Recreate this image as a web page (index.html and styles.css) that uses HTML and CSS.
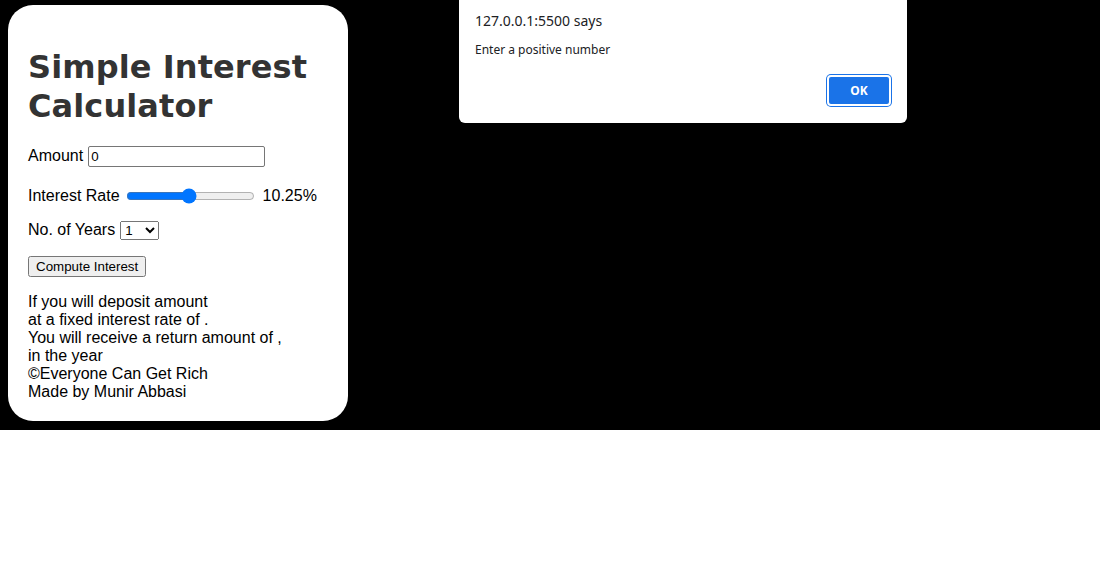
FILE: index.html
```html
<!DOCTYPE html>
<html>
<head>
<meta charset="utf-8">
<link rel="stylesheet" href="styles.css">
</head>
<body>
<div class="stage">
  <main class="card">
    <h1 class="title">Simple Interest Calculator</h1>
    <div class="row row-amount">
      <label for="amount">Amount</label>
      <input id="amount" class="amount" type="number" value="0">
    </div>
    <div class="row row-rate">
      <label for="rate">Interest Rate</label>
      <input id="rate" class="rate" type="range" min="1" max="20" step="0.25" value="10.25">
      <span class="rate-val">10.25%</span>
    </div>
    <div class="row row-years">
      <label for="years">No. of Years</label>
      <select id="years" class="years">
        <option>1</option><option>2</option><option>3</option><option>4</option><option>5</option>
        <option>6</option><option>7</option><option>8</option><option>9</option><option>10</option>
      </select>
    </div>
    <div class="row row-btn">
      <button class="compute" type="button">Compute Interest</button>
    </div>
    <div class="result">
      If you will deposit amount<br>
      at a fixed interest rate of .<br>
      You will receive a return amount of ,<br>
      in the year<br>
      ©Everyone Can Get Rich<br>
      Made by Munir Abbasi
    </div>
  </main>
</div>
<div class="dialog">
  <div class="dialog-title">127.0.0.1:5500 says</div>
  <div class="dialog-msg">Enter a positive number</div>
  <div class="dialog-actions">
    <button class="ok" type="button">OK</button>
  </div>
</div>
</body>
</html>
```
FILE: styles.css
```css
html, body {
  margin: 0;
  padding: 0;
  background: #fff;
}
body {
  font-family: "Liberation Sans", Arial, sans-serif;
  font-size: 16px;
  color: #000;
}
.stage {
  background: #000;
  height: 430px;
  padding: 5px 8px 0;
  box-sizing: border-box;
}
.card {
  width: 340px;
  height: 416px;
  box-sizing: border-box;
  background: #fff;
  border-radius: 25px;
  padding: 20px 20px 20px 20px;
}
.title {
  font-family: "DejaVu Sans", Verdana, sans-serif;
  font-weight: bold;
  font-size: 32px;
  color: #333;
  margin: 23px 0 19px;
  line-height: 39px;
  letter-spacing: 0.1px;
}
.row {
  display: flex;
  align-items: center;
}
.row label {
  margin-right: 5px;
}
.row-amount {
  height: 22px;
}
.amount {
  width: 177px;
  height: 21px;
  box-sizing: border-box;
  font-size: 13.33px;
  font-family: "Liberation Sans", Arial, sans-serif;
  border: 1px solid #767676;
  border-radius: 2px;
  padding: 1px 2px;
  margin: 0;
}
.amount::-webkit-inner-spin-button,
.amount::-webkit-outer-spin-button {
  -webkit-appearance: none;
  margin: 0;
}
.row-rate {
  margin-top: 19px;
  height: 20px;
}
.row-rate label {
  margin-right: 3px;
}
.rate {
  width: 129px;
  margin: 0 8px 0 3px;
  accent-color: #0075ff;
}
.row-years {
  margin-top: 14px;
  height: 20px;
}
.years {
  width: 39px;
  height: 19px;
  font-size: 13.33px;
  font-family: "Liberation Sans", Arial, sans-serif;
  margin: 0;
}
.row-btn {
  margin-top: 16px;
}
.compute {
  font-family: "Liberation Sans", Arial, sans-serif;
  font-size: 13.33px;
  height: 21px;
  padding: 1px 6px;
  margin: 0;
}
.result {
  margin-top: 16px;
  line-height: 18px;
}
.dialog {
  position: absolute;
  left: 459px;
  top: 0;
  width: 448px;
  height: 123px;
  box-sizing: border-box;
  background: #fff;
  border-radius: 0 0 6px 6px;
  padding: 11px 16px 0;
  font-family: "Noto Sans", "Open Sans", sans-serif;
  color: #202124;
}
.dialog-title {
  font-size: 14px;
  line-height: 20px;
}
.dialog-msg {
  font-size: 12px;
  line-height: 16px;
  margin-top: 11px;
}
.dialog-actions {
  display: flex;
  justify-content: flex-end;
  margin-top: 17px;
}
.ok {
  width: 64px;
  height: 31px;
  background: #1a73e8;
  color: #fff;
  border: 2px solid #fff;
  border-radius: 4px;
  box-shadow: 0 0 0 1px #1a73e8;
  font-family: "Noto Sans", "Open Sans", sans-serif;
  font-weight: bold;
  font-size: 12px;
}
```
